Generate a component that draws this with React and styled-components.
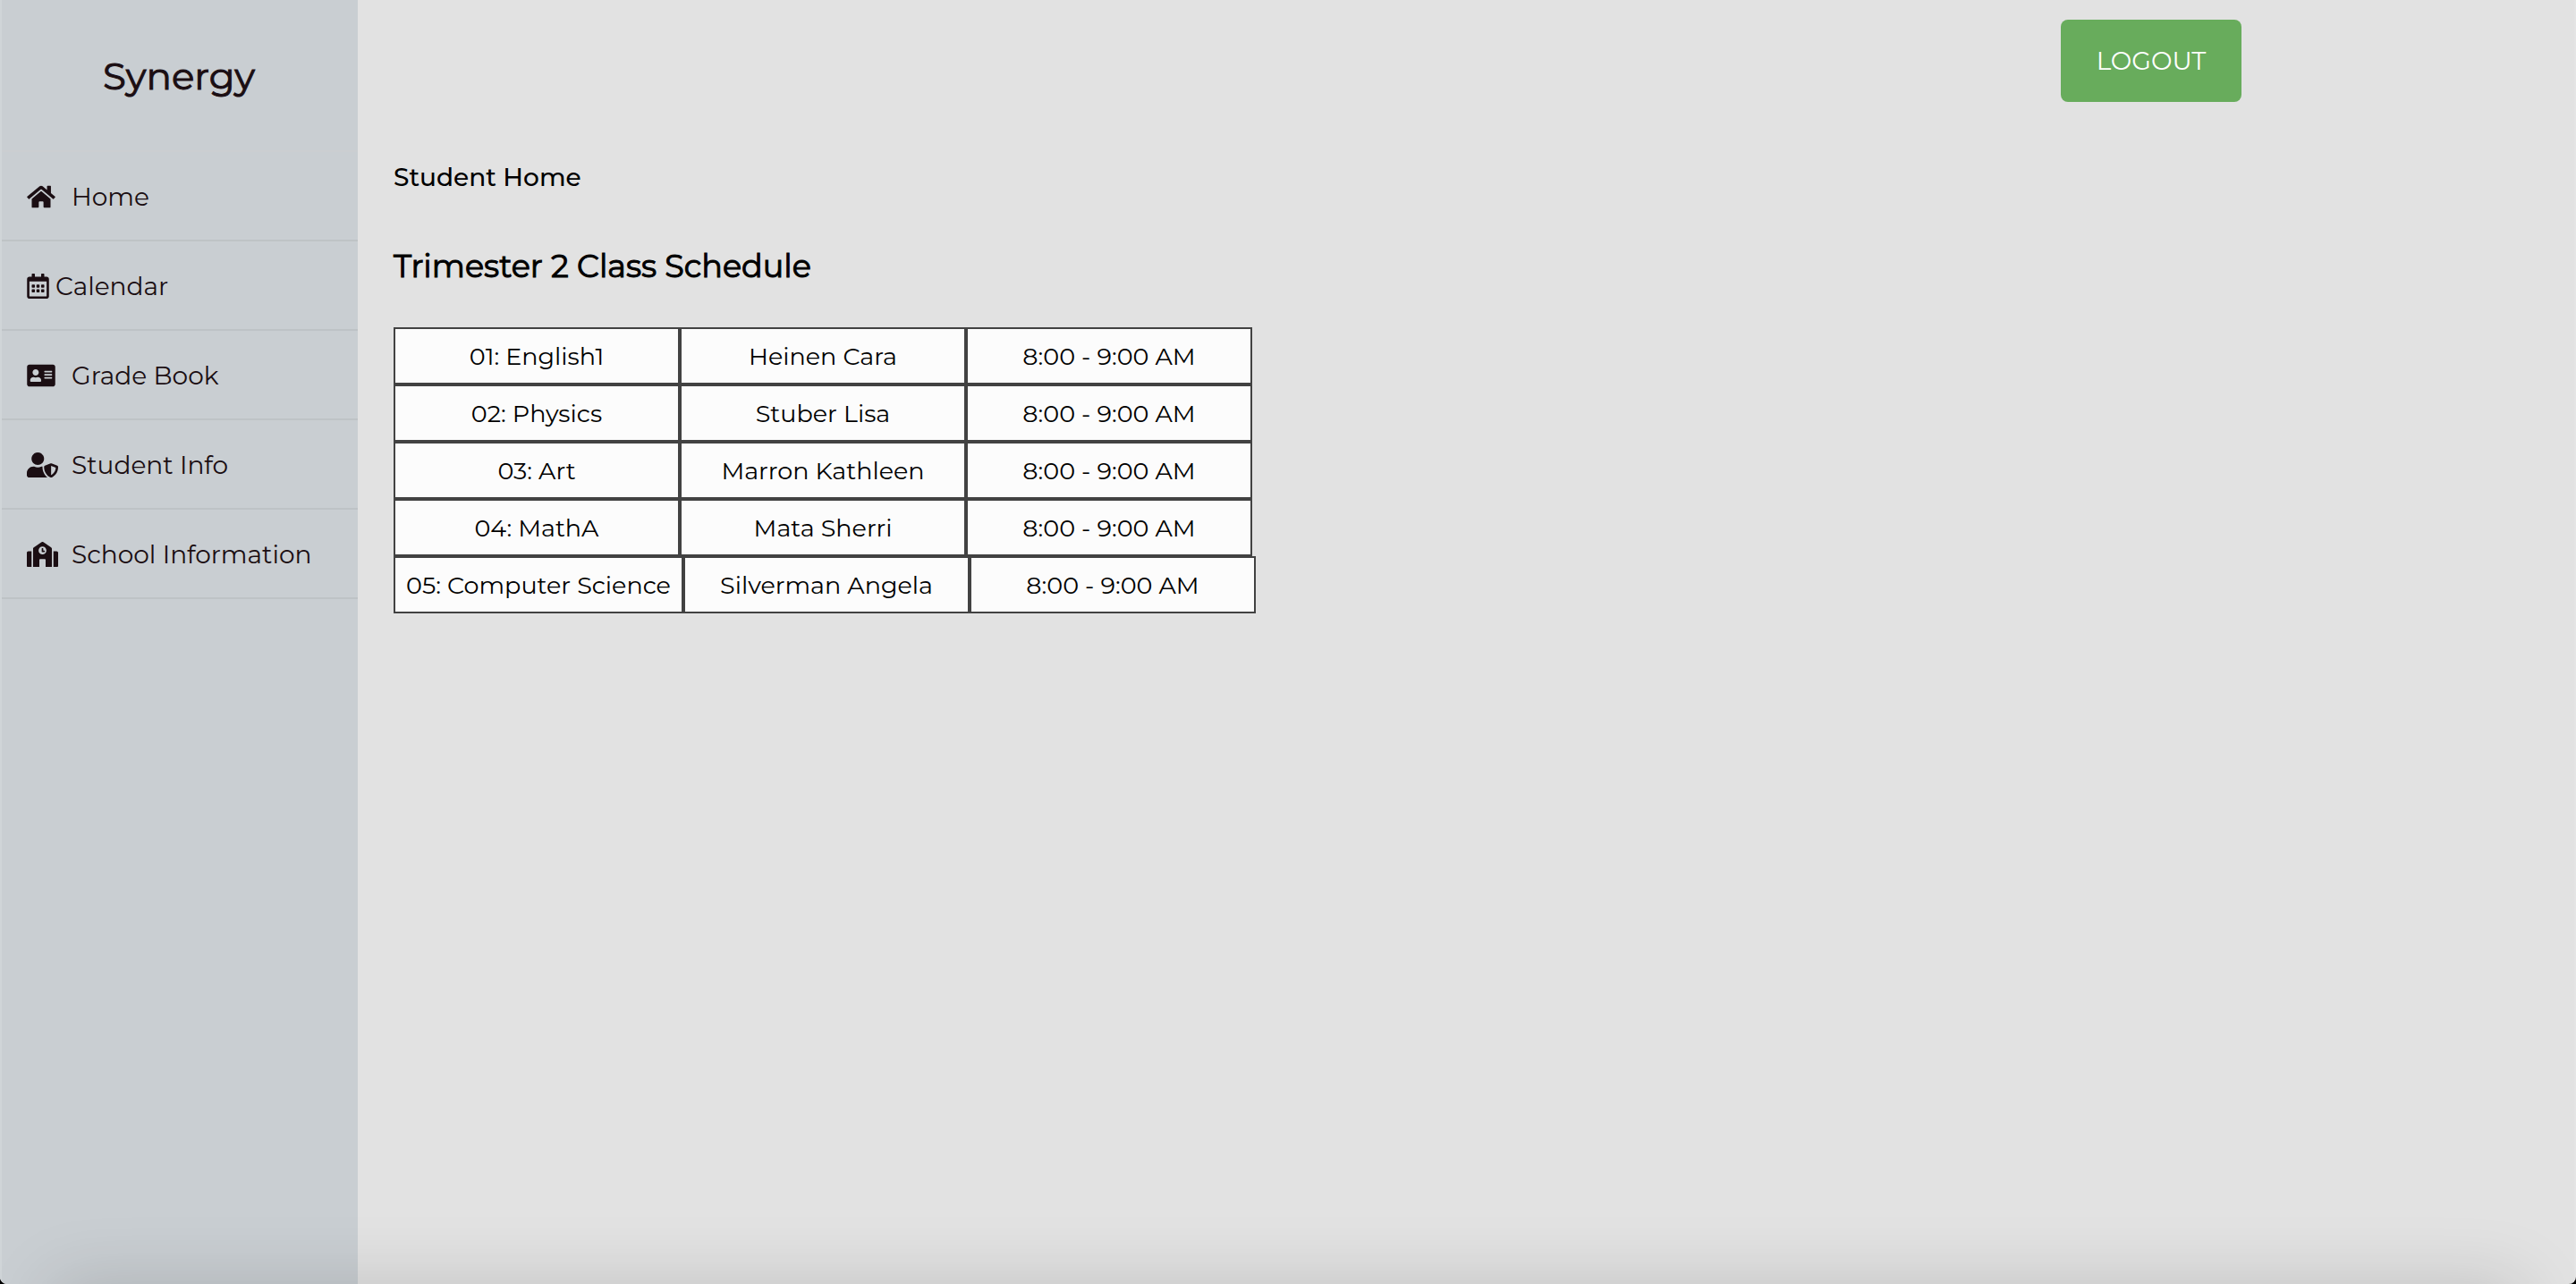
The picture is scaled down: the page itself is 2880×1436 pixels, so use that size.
import React from "react";
import styled, { createGlobalStyle } from "styled-components";
import {
  FaHome,
  FaRegCalendarAlt,
  FaAddressCard,
  FaUserShield,
  FaSchool,
} from "react-icons/fa";

const GlobalStyle = createGlobalStyle`
  *, *::before, *::after { box-sizing: border-box; }
  body {
    margin: 0;
    background: #000;
    font-family: Montserrat, Inter, "Liberation Sans", sans-serif;
  }
`;

const Page = styled.div`
  display: grid;
  grid-template-columns: 400px 1fr;
  min-height: 100vh;
  background: #e2e2e2;
  border-radius: 0 0 8px 8px;
  border-right: 2px solid #e5e5e5;
  overflow: hidden;
`;

const Sidebar = styled.aside`
  background: #c9ced2;
  border-left: 2px solid #d0d5d8;
  color: #1b0e13;
`;

const Brand = styled.h1`
  display: flex;
  align-items: center;
  justify-content: center;
  height: 170px;
  margin: 0;
  padding: 2px 2px 0 0;
  border-bottom: 2px solid #cbced1;
  font-size: 42px;
  font-weight: 400;
  -webkit-text-stroke: 1px currentColor;
`;

const NavList = styled.ul`
  margin: 0;
  padding: 0;
  list-style: none;
`;

const NavLink = styled.a`
  display: flex;
  align-items: center;
  height: 100px;
  padding: 2px 0 0 28px;
  border-bottom: 2px solid #bec3c6;
  color: inherit;
  font-size: 28px;
  text-decoration: none;
`;

const IconSlot = styled.span`
  display: flex;
  flex: none;
  width: ${(p) => (p.$narrow ? 32 : 50)}px;

  svg {
    flex: none;
    width: ${(p) => p.$iconWidth}px;
    height: 28px;
  }
`;

const Main = styled.main`
  color: #000;
`;

const TopBar = styled.header`
  display: flex;
  padding: 22px 0 0 calc(80vw - 400px);
`;

const LogoutButton = styled.button`
  width: 202px;
  height: 92px;
  padding: 0;
  border: 0;
  border-radius: 8px;
  background: #68ac5c;
  color: #fff;
  font-family: inherit;
  font-size: 28px;
`;

const Content = styled.section`
  padding: 64px 40px;
`;

const PageTitle = styled.h2`
  margin: 0;
  font-size: 28px;
  font-weight: 500;
  line-height: 40px;
`;

const ScheduleTitle = styled.h3`
  margin: 56px 0 44px;
  font-size: 35px;
  font-weight: 400;
  line-height: 48px;
  -webkit-text-stroke: 1px currentColor;
`;

const Schedule = styled.table`
  display: block;
  font-size: 27px;
  line-height: 32px;
`;

const ScheduleBody = styled.tbody`
  display: block;
`;

const ScheduleRow = styled.tr`
  display: flex;
`;

const Cell = styled.td`
  flex: none;
  width: ${(p) => (p.$wide ? 324 : 320)}px;
  padding: 15px 0 13px;
  border: 2px solid #424242;
  background: #fcfcfc;
  text-align: center;
  white-space: nowrap;
`;

const BottomShade = styled.div`
  position: fixed;
  right: 60px;
  bottom: -100px;
  left: 60px;
  height: 100px;
  box-shadow: 0 0 80px rgba(0, 0, 0, 0.15);
  pointer-events: none;
`;

const links = [
  { label: "Home", Icon: FaHome, iconWidth: 32 },
  { label: "Calendar", Icon: FaRegCalendarAlt, iconWidth: 25, narrow: true },
  { label: "Grade Book", Icon: FaAddressCard, iconWidth: 32 },
  { label: "Student Info", Icon: FaUserShield, iconWidth: 35 },
  { label: "School Information", Icon: FaSchool, iconWidth: 35 },
];

const classes = [
  { name: "01: English1", teacher: "Heinen Cara", time: "8:00 - 9:00 AM" },
  { name: "02: Physics", teacher: "Stuber Lisa", time: "8:00 - 9:00 AM" },
  { name: "03: Art", teacher: "Marron Kathleen", time: "8:00 - 9:00 AM" },
  { name: "04: MathA", teacher: "Mata Sherri", time: "8:00 - 9:00 AM" },
  {
    name: "05: Computer Science",
    teacher: "Silverman Angela",
    time: "8:00 - 9:00 AM",
    wide: true,
  },
];

export default function App() {
  return (
    <>
      <GlobalStyle />
      <Page>
        <Sidebar>
          <Brand>Synergy</Brand>
          <nav>
            <NavList>
              {links.map(({ label, Icon, iconWidth, narrow }) => (
                <li key={label}>
                  <NavLink href="#">
                    <IconSlot $narrow={narrow} $iconWidth={iconWidth}>
                      <Icon aria-hidden="true" />
                    </IconSlot>
                    {label}
                  </NavLink>
                </li>
              ))}
            </NavList>
          </nav>
        </Sidebar>
        <Main>
          <TopBar>
            <LogoutButton type="button">LOGOUT</LogoutButton>
          </TopBar>
          <Content>
            <PageTitle>Student Home</PageTitle>
            <ScheduleTitle>Trimester 2 Class Schedule</ScheduleTitle>
            <Schedule>
              <ScheduleBody>
                {classes.map((c) => (
                  <ScheduleRow key={c.name}>
                    <Cell $wide={c.wide}>{c.name}</Cell>
                    <Cell>{c.teacher}</Cell>
                    <Cell>{c.time}</Cell>
                  </ScheduleRow>
                ))}
              </ScheduleBody>
            </Schedule>
          </Content>
        </Main>
      </Page>
      <BottomShade />
    </>
  );
}
